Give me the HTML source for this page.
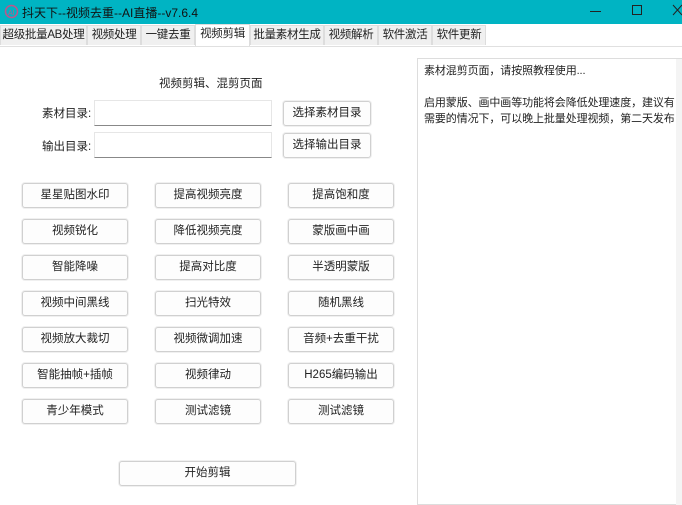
<!DOCTYPE html><html><head><meta charset="utf-8"><style>
*{margin:0;padding:0;box-sizing:border-box}
body{width:682px;height:505px;overflow:hidden;background:#fff;font-family:"Liberation Sans","Noto Sans CJK SC",sans-serif;font-size:11.5px;color:#222;position:relative}
.t{position:absolute;left:0;top:0;width:682px;height:24px;background:#00b4c3}
.tt{position:absolute;left:22px;top:4px;font-size:12px;color:#111}
.tab{position:absolute;top:25px;height:20px;background:#f0f0f0;border:1px solid #ddd;border-bottom:none;text-align:center;line-height:19px;font-size:11.5px;white-space:nowrap;overflow:hidden;letter-spacing:-0.3px}
.sel{background:#fff;top:24px;height:22px}
.a{position:absolute;white-space:nowrap}
.b{position:absolute;width:106px;height:25px;border:1px solid #d0d0d0;border-radius:3px;background:#fdfdfd;text-align:center;line-height:23px;font-size:11.5px;box-shadow:0 0 0 1px #f0f0f0;white-space:nowrap}
.in{position:absolute;left:94px;width:178px;height:26px;border:1px solid #e6e6e6;border-bottom:1px solid #888;background:#fff}
</style></head><body>
<div class="t">
<svg class="a" style="left:4px;top:4px" width="15" height="15" viewBox="0 0 15 15"><circle cx="7.5" cy="7.5" r="6" fill="none" stroke="#c0548a" stroke-width="1.5"/><text x="4" y="11" font-size="7" fill="#c0548a" font-family="Liberation Sans">AI</text></svg>
<div class="tt">抖天下--视频去重--AI直播--v7.6.4</div>
<div class="a" style="left:590px;top:11px;width:11px;height:1px;background:#222"></div>
<div class="a" style="left:632px;top:5px;width:10px;height:10px;border:1px solid #222"></div>
<svg class="a" style="left:672px;top:4px" width="10" height="12"><path d="M1 1L10 11M10 1L1 11" stroke="#222"/></svg>
</div>
<div class="tab" style="left:0;width:87px">超级批量AB处理</div>
<div class="tab" style="left:87px;width:54px">视频处理</div>
<div class="tab" style="left:141px;width:54px">一键去重</div>
<div class="tab sel" style="left:195px;width:55px">视频剪辑</div>
<div class="tab" style="left:250px;width:74px">批量素材生成</div>
<div class="tab" style="left:324px;width:54px">视频解析</div>
<div class="tab" style="left:378px;width:54px">软件激活</div>
<div class="tab" style="left:432px;width:54px">软件更新</div>
<div class="a" style="left:0;top:46px;width:682px;height:1px;background:#e0e0e0"></div>
<div class="a" style="left:159px;top:75px">视频剪辑、混剪页面</div>
<div class="a" style="left:42px;top:105px">素材目录:</div>
<div class="a" style="left:42px;top:138px">输出目录:</div>
<div class="in" style="top:100px"></div>
<div class="in" style="top:132px"></div>
<div class="b" style="left:283px;top:101px;width:88px">选择素材目录</div>
<div class="b" style="left:283px;top:133px;width:88px">选择输出目录</div>
<div class="b" style="left:22px;top:183px">星星贴图水印</div><div class="b" style="left:155px;top:183px">提高视频亮度</div><div class="b" style="left:288px;top:183px">提高饱和度</div>
<div class="b" style="left:22px;top:219px">视频锐化</div><div class="b" style="left:155px;top:219px">降低视频亮度</div><div class="b" style="left:288px;top:219px">蒙版画中画</div>
<div class="b" style="left:22px;top:255px">智能降噪</div><div class="b" style="left:155px;top:255px">提高对比度</div><div class="b" style="left:288px;top:255px">半透明蒙版</div>
<div class="b" style="left:22px;top:291px">视频中间黑线</div><div class="b" style="left:155px;top:291px">扫光特效</div><div class="b" style="left:288px;top:291px">随机黑线</div>
<div class="b" style="left:22px;top:327px">视频放大裁切</div><div class="b" style="left:155px;top:327px">视频微调加速</div><div class="b" style="left:288px;top:327px">音频+去重干扰</div>
<div class="b" style="left:22px;top:363px">智能抽帧+插帧</div><div class="b" style="left:155px;top:363px">视频律动</div><div class="b" style="left:288px;top:363px">H265编码输出</div>
<div class="b" style="left:22px;top:399px">青少年模式</div><div class="b" style="left:155px;top:399px">测试滤镜</div><div class="b" style="left:288px;top:399px">测试滤镜</div>
<div class="b" style="left:119px;top:461px;width:177px">开始剪辑</div>
<div class="a" style="left:417px;top:58px;width:265px;height:447px;border:1px solid #ddd;border-right:none;padding:4px 4px 4px 6px;line-height:16px;font-size:11px;white-space:normal;letter-spacing:-0.1px">素材混剪页面，请按照教程使用...<br><br>启用蒙版、画中画等功能将会降低处理速度，建议有需要的情况下，可以晚上批量处理视频，第二天发布</div>
<div class="a" style="left:676px;top:59px;width:6px;height:446px;background:#f4f4f4"></div>
</body></html>
